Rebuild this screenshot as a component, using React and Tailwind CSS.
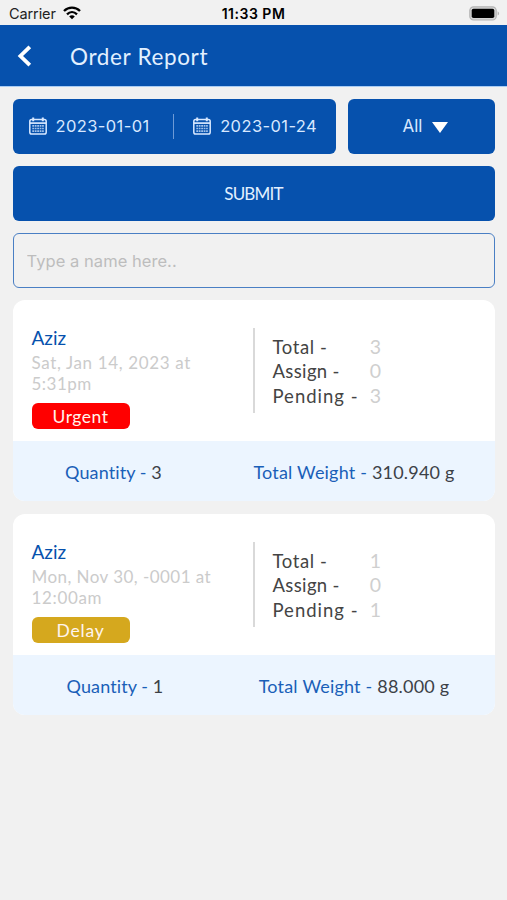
import React, { useState } from 'react';

const orders = [
    {
        id: 1,
        name: 'Aziz',
        date: ['Sat, Jan 14, 2023 at', '5:31pm'],
        dateClass: ['tracking-[0.65px]', 'tracking-[0.5px]'],
        status: 'Urgent',
        statusClass: 'bg-[#ff0000] tracking-[0.5px]',
        counts: [3, 0, 3],
        quantity: '3',
        quantityClass: 'pl-[1px]',
        weight: '310.940 g',
    },
    {
        id: 2,
        name: 'Aziz',
        date: ['Mon, Nov 30, -0001 at', '12:00am'],
        dateClass: ['tracking-[0.45px]', 'tracking-[0.65px]'],
        status: 'Delay',
        statusClass: 'bg-[#d5a81e] tracking-[0.8px]',
        counts: [1, 0, 1],
        quantity: '1',
        quantityClass: 'pl-[4px]',
        weight: '88.000 g',
    },
];

const countLabels = [
    { label: 'Total -', className: 'tracking-[0.6px]' },
    { label: 'Assign -', className: 'tracking-[0.35px]' },
    { label: 'Pending -', className: 'tracking-[1px]' },
];

const WifiIcon = () => (
    <svg width="18" height="14" viewBox="0 0 18 14" fill="none" stroke="#000" strokeWidth="2.3" className="-mt-[2px]">
        <path d="M1 5C5.5 0.5 12.5 0.5 17 5" />
        <path d="M4 8.3C7 5.4 11 5.4 14 8.3" />
        <path d="M9 13.2L6.2 10.4C7.8 9 10.2 9 11.8 10.4Z" fill="#000" stroke="none" />
    </svg>
);

const BatteryIcon = () => (
    <svg width="31" height="15" viewBox="0 0 31 15">
        <rect x="0.8" y="0.8" width="26.4" height="13.2" rx="3.8" fill="#d6d6d6" stroke="#b4b4b4" strokeWidth="1.2" />
        <rect x="2.7" y="2.7" width="22.6" height="9.4" rx="1.8" fill="#000" />
        <path d="M28.6 5.2C30.6 6 30.6 8.8 28.6 9.6Z" fill="#b4b4b4" />
    </svg>
);

const CalendarIcon = () => (
    <svg width="18" height="18" viewBox="0 0 18 18" fill="none" stroke="#d8e8ff">
        <rect x="0.8" y="2.6" width="16.4" height="14.4" rx="1.8" strokeWidth="1.5" />
        <path d="M1 6.1H17" strokeWidth="1.7" />
        <path d="M4.2 0.6V4.2M13.8 0.6V4.2" strokeWidth="2" />
        <path d="M3.3 8.8H14.8M3.3 11.5H14.8M3.3 14.2H14.8" strokeWidth="1.7" strokeDasharray="1.8 0.65" strokeOpacity="0.75" />
    </svg>
);

const StatusBar = () => (
    <div className="grid grid-cols-3 items-center h-[25px] pt-[2px] px-[9px] font-['Inter',sans-serif] text-black">
        <div className="flex items-center gap-[7px]">
            <span className="pt-[1px] text-[14.5px] leading-none -tracking-[0.1px] text-[#222]">Carrier</span>
            <WifiIcon />
        </div>
        <span className="text-center text-[14px] leading-none font-semibold tracking-[0.5px] whitespace-nowrap">11:33 PM</span>
        <div className="flex justify-end -mr-[2px]">
            <BatteryIcon />
        </div>
    </div>
);

const DateField = ({ value }) => (
    <button className="flex items-center gap-[9px]">
        <CalendarIcon />
        <span className="font-['Inter',sans-serif] text-[16.5px] leading-none tracking-[0.4px] whitespace-nowrap">{value}</span>
    </button>
);

const OrderCard = ({ order }) => (
    <div className="rounded-xl overflow-hidden bg-white">
        <div className="flex h-[141px] pl-[19px] pt-[27.5px]">
            <div className="w-[221px] shrink-0">
                <h2 className="text-[19px] leading-[20px] text-[#0651ad]">{order.name}</h2>
                <div className="mt-[4px] mb-[9px] text-[17px] leading-[21px] text-[#cbcbcb]">
                    {order.date.map((line, i) => (
                        <p key={line} className={`whitespace-nowrap ${order.dateClass[i]}`}>{line}</p>
                    ))}
                </div>
                <div className={`flex items-center justify-center w-[98px] h-[26px] pt-[2px] rounded-md text-[17.5px] leading-none text-[#fff4ed] ${order.statusClass}`}>
                    {order.status}
                </div>
            </div>
            <div className="h-[85px] border-l-2 border-[#d9d9d9] pl-[18px] pt-[7px] text-[18.5px] leading-[24.5px]">
                {countLabels.map((item, i) => (
                    <div key={item.label} className="flex">
                        <span className={`w-[97px] text-[#444] ${item.className}`}>{item.label}</span>
                        <span className="w-[12px] text-center text-[#cfcfcf] text-[19.5px]">{order.counts[i]}</span>
                    </div>
                ))}
            </div>
        </div>
        <div className="flex items-center h-[60px] pt-[2px] bg-[#ecf5ff] text-[18px] whitespace-nowrap">
            <p className={`w-[201px] text-center text-[#1a5fb8] tracking-[0.1px] ${order.quantityClass}`}>
                Quantity - <span className="text-[#3c4147]">{order.quantity}</span>
            </p>
            <p className="flex-1 text-center text-[#1a5fb8] tracking-[0.2px]">
                Total Weight - <span className="text-[#3c4147]">{order.weight}</span>
            </p>
        </div>
    </div>
);

const App = () => {
    const [query, setQuery] = useState('');

    return (
        <div className="w-full min-h-screen bg-[#f1f1f1] font-['Lato',sans-serif]">
            <StatusBar />
            <header className="flex items-center h-[62px] pl-[17px] bg-[#0651ad] border-b border-[#a9cdf5]">
                <button aria-label="Back">
                    <svg width="15" height="22" viewBox="0 0 15 22" fill="none" stroke="#fff" strokeWidth="3.8">
                        <path d="M12.8 1.8L3.4 11L12.8 20.2" />
                    </svg>
                </button>
                <h1 className="ml-[38px] pt-[3px] text-[22.5px] leading-none tracking-[0.65px] text-[#e2f0ff]">Order Report</h1>
            </header>

            <main className="flex flex-col gap-3 px-[12.5px] pt-[11.5px]">
                <div className="flex gap-3 h-[55px] text-[#d8e8ff]">
                    <div className="flex items-center w-[323px] shrink-0 px-4 rounded-md bg-[#0651ad]">
                        <DateField value="2023-01-01" />
                        <span className="w-[1.5px] h-[25px] ml-[23px] mr-[19px] bg-[#6d9ad6]" />
                        <DateField value="2023-01-24" />
                    </div>
                    <button className="flex flex-1 items-center justify-center gap-[10px] pl-[9px] rounded-md bg-[#0651ad]">
                        <span className="font-['Inter',sans-serif] text-[17px] leading-none">All</span>
                        <svg width="16" height="11" viewBox="0 0 16 11" className="mt-[2px]">
                            <path d="M0 0H16L8 11Z" fill="#fff" />
                        </svg>
                    </button>
                </div>
                <button className="h-[55px] pt-[1px] rounded-md bg-[#0651ad] text-[#e2f0ff] text-[17px] -tracking-[0.8px]">SUBMIT</button>
                <input
                    value={query}
                    onChange={(e) => setQuery(e.target.value)}
                    placeholder="Type a name here.."
                    className="h-[55px] px-[13px] pt-[1px] rounded-md border-[1.5px] border-[#4a7fc4] bg-transparent font-['Inter',sans-serif] text-[16.5px] tracking-[0.05px] placeholder:text-[#bdbdbd] outline-none"
                />
                <div className="flex flex-col gap-[13px] pt-[0.5px]">
                    {orders.map((order) => (
                        <OrderCard key={order.id} order={order} />
                    ))}
                </div>
            </main>
        </div>
    );
};

export default App;
